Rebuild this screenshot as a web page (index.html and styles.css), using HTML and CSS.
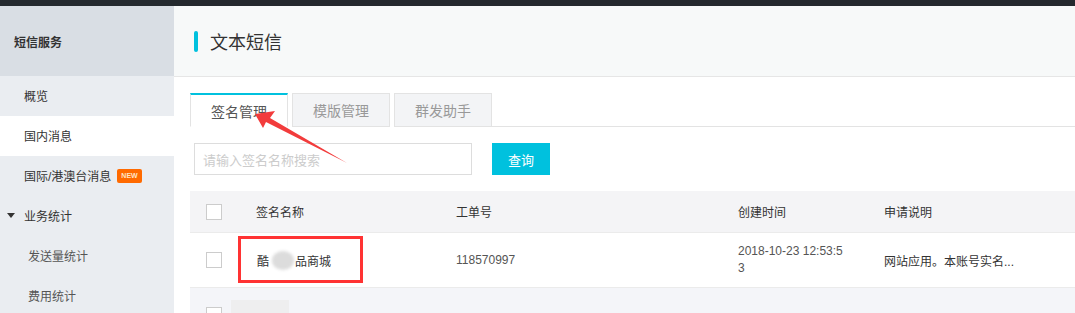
FILE: index.html
```html
<!DOCTYPE html>
<html lang="zh">
<head>
<meta charset="utf-8">
<link rel="stylesheet" href="styles.css">
</head>
<body>
<div class="topbar"></div>
<div class="layout">
  <aside class="sidebar">
    <div class="side-head">短信服务</div>
    <div class="side-item">概览</div>
    <div class="side-item active">国内消息</div>
    <div class="side-item">国际/港澳台消息<span class="badge">NEW</span></div>
    <div class="side-item group"><span class="caret"></span>业务统计</div>
    <div class="side-item sub">发送量统计</div>
    <div class="side-item sub">费用统计</div>
  </aside>
  <main class="main">
    <div class="page-head"><span class="bar"></span><span class="page-title">文本短信</span></div>
    <div class="content">
      <div class="tabs">
        <div class="tab active">签名管理</div>
        <div class="tab">模版管理</div>
        <div class="tab">群发助手</div>
        <div class="tab-rest"></div>
      </div>
      <div class="search">
        <div class="input">请输入签名名称搜索</div>
        <div class="btn">查询</div>
      </div>
      <div class="table">
        <div class="row head">
          <div class="cell"><span class="cb"></span></div>
          <div class="cell">签名名称</div>
          <div class="cell">工单号</div>
          <div class="cell">创建时间</div>
          <div class="cell">申请说明</div>
        </div>
        <div class="row">
          <div class="cell"><span class="cb"></span></div>
          <div class="cell name">酷<span class="blur"></span>品商城</div>
          <div class="cell num">118570997</div>
          <div class="cell num date">2018-10-23 12:53:53</div>
          <div class="cell">网站应用。本账号实名...</div>
        </div>
        <div class="row alt">
          <div class="cell"><span class="cb"></span></div>
          <div class="cell"><span class="ghost"></span></div>
          <div class="cell"></div>
          <div class="cell"></div>
          <div class="cell"></div>
        </div>
      </div>
    </div>
  </main>
</div>
<div class="mark-box"></div>
<svg class="arrow" width="1075" height="313" viewBox="0 0 1075 313">
  <polygon points="255,114 275,111 270,118 347,163 266,122 263,128" fill="#f23c3c"/>
</svg>
</body>
</html>
```

FILE: styles.css
```css
* { box-sizing: border-box; }
html, body { margin: 0; padding: 0; }
body {
  width: 1075px;
  height: 313px;
  overflow: hidden;
  position: relative;
  font-family: "Liberation Sans", "Noto Sans CJK SC", sans-serif;
  font-size: 12px;
  color: #333;
  background: #fff;
}
.topbar { height: 6px; background: #24292e; }
.layout { display: flex; height: 307px; overflow: hidden; }
.sidebar { width: 174px; flex: none; background: #eaedf1; }
.side-head {
  height: 70px;
  background: #d9dee4;
  display: flex;
  align-items: center;
  padding-left: 14px;
  font-weight: bold;
  color: #333;
}
.side-item {
  height: 40px;
  display: flex;
  align-items: center;
  padding-left: 24px;
  padding-bottom: 1px;
  color: #333;
}
.side-item.active { background: #fff; }
.side-item.sub { padding-left: 28px; color: #555; }
.side-item.group { padding-left: 7px; }
.caret {
  width: 0; height: 0;
  border-left: 4px solid transparent;
  border-right: 4px solid transparent;
  border-top: 5px solid #333;
  margin-right: 9px;
}
.badge {
  margin-left: 6px;
  background: #ff6a00;
  color: #fde4c8;
  font-size: 7px;
  font-weight: bold;
  height: 14px;
  line-height: 14px;
  padding: 0 4px;
  border-radius: 2px;
}
.main { flex: 1; min-width: 0; }
.page-head {
  height: 71px;
  background: #f7f9f9;
  border-bottom: 1px solid #e6e6e6;
  display: flex;
  align-items: center;
  padding-left: 20px;
}
.bar { width: 4px; height: 21px; background: #00c1de; border-radius: 2px; margin-right: 12px; }
.page-title { font-size: 18px; color: #333; }
.content { padding: 16px 0 0 16px; }
.tabs { display: flex; height: 34px; }
.tab {
  width: 98px;
  margin-right: 4px;
  height: 34px;
  border: 1px solid #e3e3e3;
  background: #f3f4f6;
  color: #999;
  font-size: 14px;
  display: flex;
  align-items: center;
  justify-content: center;
}
.tab.active {
  background: #fff;
  border-top: 2px solid #00c1de;
  border-bottom-color: #fff;
  color: #555;
}
.tab-rest { flex: 1; border-bottom: 1px solid #e3e3e3; margin-left: -4px; }
.search { display: flex; margin: 16px 0 16px 4px; height: 32px; }
.input {
  width: 278px;
  border: 1px solid #ddd;
  color: #ccc;
  font-size: 13px;
  display: flex;
  align-items: center;
  padding-left: 8px;
}
.btn {
  margin-left: 20px;
  width: 58px;
  background: #00c1de;
  color: #fff;
  font-size: 13px;
  display: flex;
  align-items: center;
  justify-content: center;
}
.row {
  display: grid;
  grid-template-columns: 50px 200px 282px 146px 1fr;
  height: 55px;
  border-bottom: 1px solid #ebebeb;
  align-items: center;
}
.row.head { height: 42px; background: #f4f4f6; }
.row.alt { background: #f4f5f9; }
.cell { padding-left: 16px; }
.cell.date { word-break: break-all; padding-right: 24px; line-height: 17px; }
.cell.num { color: #555; }
.cb {
  display: block;
  width: 16px;
  height: 16px;
  border: 1px solid #ccc;
  background: #fff;
}
.name { display: flex; align-items: center; padding-left: 17px; }
.blur {
  display: inline-block;
  width: 22px;
  height: 19px;
  margin: 0 1px 0 3px;
  background: #dcdcdc;
  border-radius: 50%;
  filter: blur(1.5px);
}
.ghost {
  display: block;
  margin-left: -25px;
  width: 58px;
  height: 30px;
  background: #eeeeef;
}
.mark-box {
  position: absolute;
  left: 238px;
  top: 236px;
  width: 125px;
  height: 47px;
  border: 3px solid #f33;
}
.arrow { position: absolute; left: 0; top: 0; }
```
